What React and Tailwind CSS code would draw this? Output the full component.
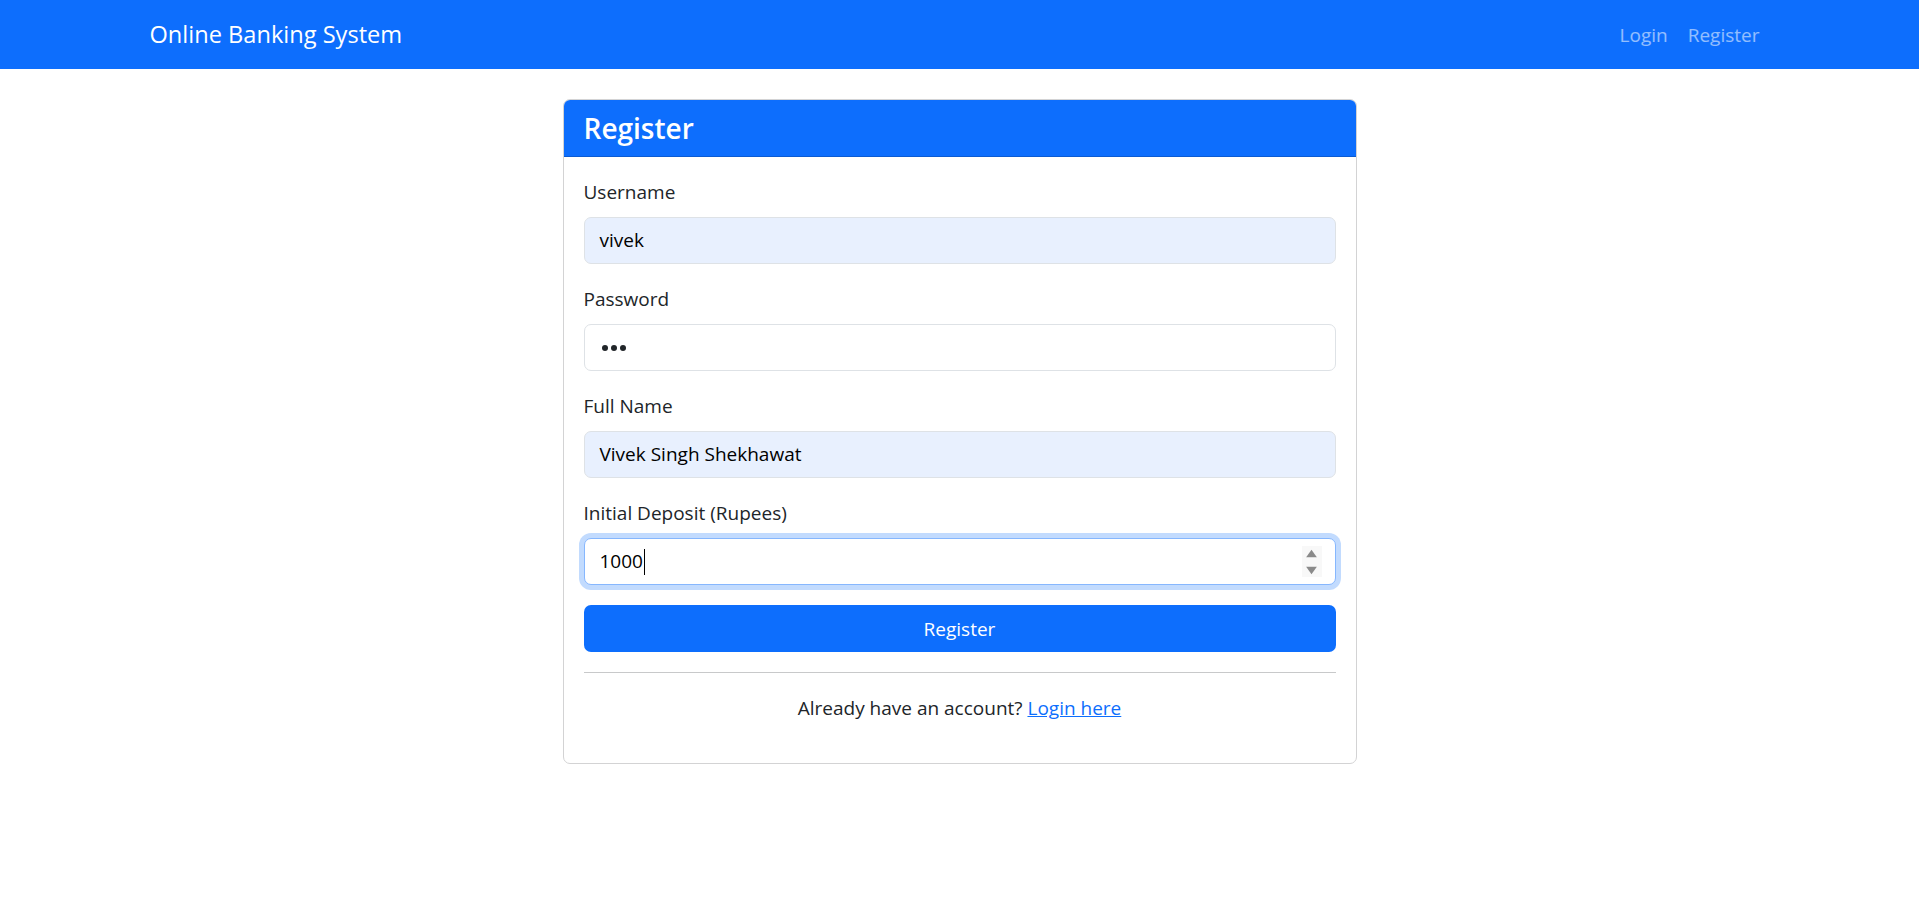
import React from "react";

function Field({ label, children, focused = false, filled = false }) {
  return (
    <div className="mb-[20px]">
      <label className="block text-[19px] leading-[30px] mb-[10px]">{label}</label>
      <div
        className={
          "h-[47px] rounded-[7px] border px-[15px] flex items-center text-[19px] text-[#000] " +
          (focused
            ? "border-[#86b7fe] bg-white shadow-[0_0_0_5px_rgba(13,110,253,0.25)]"
            : filled
            ? "border-[#dee2e6] bg-[#e8f0fe]"
            : "border-[#dee2e6] bg-white")
        }
      >
        {children}
      </div>
    </div>
  );
}

function Spinner() {
  return (
    <div className="ml-auto -mr-[2px] w-[20px] h-[31px] bg-[#f8f8f8] flex items-center justify-center">
      <svg viewBox="0 0 12 28" className="w-[13px] h-[30px]">
        <polygon points="6,2.5 11,9.5 1,9.5" fill="#8a8a8a" />
        <polygon points="1,18.5 11,18.5 6,25.5" fill="#8a8a8a" />
      </svg>
    </div>
  );
}

export default function App() {
  return (
    <div className="min-h-screen bg-white text-[#212529] font-['Open_Sans','Noto_Sans',sans-serif]">
      <nav className="bg-[#0d6efd] h-[69px]">
        <div className="mx-auto w-[1650px] h-full px-[15px] flex items-center justify-between">
          <a href="#" className="text-white text-[23.6px] leading-[37px]">Online Banking System</a>
          <ul className="flex items-center">
            <li><a href="#" className="block px-[10px] text-[19px] leading-[30px] text-white/55">Login</a></li>
            <li><a href="#" className="block px-[10px] text-[19px] leading-[30px] text-white/55">Register</a></li>
          </ul>
        </div>
      </nav>

      <main className="pt-[30px]">
        <div className="mx-auto w-[794px] rounded-[7px] border border-[#d3d3d4] overflow-hidden">
          <div className="bg-[#0d6efd] border-b border-[#0b5bd2] px-[20px] py-[10px]">
            <h4 className="text-white text-[28px] font-semibold leading-[36px]">Register</h4>
          </div>
          <div className="p-[20px]">
            <Field label="Username" filled>vivek</Field>
            <Field label="Password">
              <span className="flex gap-[3px] pl-[2px]">
                <span className="w-[6px] h-[6px] rounded-full bg-[#212529]" />
                <span className="w-[6px] h-[6px] rounded-full bg-[#212529]" />
                <span className="w-[6px] h-[6px] rounded-full bg-[#212529]" />
              </span>
            </Field>
            <Field label="Full Name" filled>Vivek Singh Shekhawat</Field>
            <Field label="Initial Deposit (Rupees)" focused>
              <span>1000</span>
              <span className="w-px h-[26px] bg-black ml-px" />
              <Spinner />
            </Field>
            <button className="w-full h-[47px] rounded-[7px] bg-[#0d6efd] text-white text-[19px] pt-px">Register</button>
            <hr className="my-[20px] border-0 border-t border-[#c8c9ca]" />
            <p className="text-center text-[19px] leading-[30px] mb-[20px]">
              Already have an account? <a href="#" className="text-[#0d6efd] underline">Login here</a>
            </p>
          </div>
        </div>
      </main>
    </div>
  );
}
